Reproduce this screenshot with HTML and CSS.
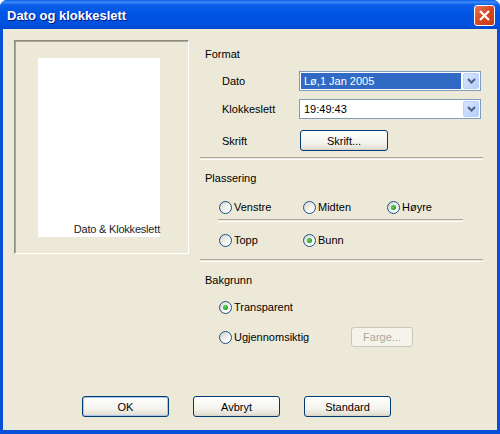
FILE: index.html
```html
<!DOCTYPE html>
<html lang="no">
<head>
  <meta charset="UTF-8" />
  <title>Dato og klokkeslett</title>
  <link rel="stylesheet" href="styles.css">
</head>
<body>
  <div class="window">
    <div class="titlebar">
      <span class="title">Dato og klokkeslett</span>
      <div class="close">
        <svg width="13" height="13" viewBox="0 0 13 13"><path d="M2 2 L11 11 M11 2 L2 11" stroke="#fff" stroke-width="2.2" fill="none"/></svg>
      </div>
    </div>

    <div class="client">
      <div class="main">
        <!-- forhåndsvisning -->
        <div class="preview">
          <div class="paper"><span>Dato &amp; Klokkeslett</span></div>
        </div>

        <div class="settings">
          <div class="group-title first">Format</div>
          <div class="field dato">
            <span>Dato</span>
            <div class="combo">
              <div class="combo-text selected">Lø,1 Jan 2005</div>
              <div class="combo-btn"><svg width="9" height="6" viewBox="0 0 9 6"><path d="M1 1 L4.5 4.5 L8 1" stroke="#4d6185" stroke-width="2" fill="none"/></svg></div>
            </div>
          </div>
          <div class="field klokke">
            <span>Klokkeslett</span>
            <div class="combo">
              <div class="combo-text">19:49:43</div>
              <div class="combo-btn"><svg width="9" height="6" viewBox="0 0 9 6"><path d="M1 1 L4.5 4.5 L8 1" stroke="#4d6185" stroke-width="2" fill="none"/></svg></div>
            </div>
          </div>
          <div class="field skrift">
            <span>Skrift</span>
            <button class="xp-btn font-btn">Skrift...</button>
          </div>

          <div class="sep"></div>

          <div class="group-title">Plassering</div>
          <div class="radio-row row-top">
            <label class="opt"><i class="radio"></i>Venstre</label>
            <label class="opt"><i class="radio"></i>Midten</label>
            <label class="opt"><i class="radio on"></i>Høyre</label>
          </div>
          <div class="sep inner"></div>
          <div class="radio-row row-bottom">
            <label class="opt"><i class="radio"></i>Topp</label>
            <label class="opt"><i class="radio on"></i>Bunn</label>
          </div>

          <div class="sep low"></div>

          <div class="group-title">Bakgrunn</div>
          <div class="radio-row row-trans">
            <label class="opt"><i class="radio on"></i>Transparent</label>
          </div>
          <div class="radio-row row-opaque">
            <label class="opt wide"><i class="radio"></i>Ugjennomsiktig</label>
            <button class="xp-btn disabled">Farge...</button>
          </div>
        </div>
      </div>

      <div class="buttons">
        <button class="xp-btn big default">OK</button>
        <button class="xp-btn big">Avbryt</button>
        <button class="xp-btn big">Standard</button>
      </div>
    </div>
  </div>
</body>
</html>
```

FILE: styles.css
```css
body {
  margin: 0;
  width: 500px;
  height: 434px;
  overflow: hidden;
  background: #fff;
  font-family: "Liberation Sans", Arial, sans-serif;
  font-size: 11px;
  color: #000;
}

.window {
  width: 500px;
  height: 434px;
  box-sizing: border-box;
  background: #0850d8;
  border-radius: 7px 7px 0 0;
  display: flex;
  flex-direction: column;
  padding: 0 3px 4px 3px;
}

.titlebar {
  height: 29px;
  margin: 0 -3px;
  border-radius: 7px 7px 0 0;
  background: linear-gradient(#0a5de8 0px, #3d8cf8 2px, #0b5ee9 5px, #0055e5 14px, #0051de 24px, #0148cf 29px);
  display: flex;
  align-items: center;
  justify-content: space-between;
  padding: 0 5px 0 7px;
}

.title {
  color: #fff;
  font-weight: bold;
  font-size: 13px;
  text-shadow: 1px 1px #0a1883;
  margin-top: 1px;
}

.close {
  width: 21px;
  height: 21px;
  box-sizing: border-box;
  border: 1px solid #fff;
  border-radius: 3px;
  background: linear-gradient(135deg, #e8785a, #d9461f 50%, #c83c16);
  display: flex;
  align-items: center;
  justify-content: center;
  margin-top: 2px;
}

.client {
  flex: 1;
  background: #ece9d8;
  display: flex;
  flex-direction: column;
}

.main {
  display: flex;
  padding: 11px 0 0 11px;
}

.preview {
  width: 175px;
  height: 214px;
  box-sizing: border-box;
  border-top: 1px solid #8d8b80;
  border-left: 1px solid #8d8b80;
  border-right: 1px solid #fff;
  border-bottom: 1px solid #fff;
  box-shadow: inset 1px 1px #aca899;
  padding: 17px 0 0 23px;
}

.paper {
  width: 122px;
  height: 179px;
  background: #fff;
  display: flex;
  align-items: flex-end;
  justify-content: flex-end;
  color: #222;
  padding-bottom: 2px;
  box-sizing: border-box;
  letter-spacing: -0.2px;
}

.settings {
  width: 283px;
  margin-left: 11px;
}

.group-title {
  height: 14px;
  line-height: 14px;
  padding-left: 5px;
  margin-top: 11px;
}

.group-title.first {
  margin-top: 7px;
}

.field {
  display: grid;
  grid-template-columns: 77px 182px;
  align-items: center;
  padding-left: 22px;
}

.dato { margin-top: 10px; }
.klokke { margin-top: 8px; }
.skrift { margin-top: 11px; }

.combo {
  height: 20px;
  box-sizing: border-box;
  border: 1px solid #7f9db9;
  background: #fff;
  display: flex;
  padding: 1px;
}

.combo-text {
  flex: 1;
  line-height: 16px;
  padding-left: 3px;
  margin-right: 2px;
}

.combo-text.selected {
  background: #316ac5;
  color: #fff;
}

.combo-btn {
  width: 16px;
  box-sizing: border-box;
  border: 1px solid #b9d1fa;
  border-radius: 2px;
  background: linear-gradient(135deg, #d8e5fd, #b8cdf8);
  display: flex;
  align-items: center;
  justify-content: center;
}

.xp-btn {
  font-family: "Liberation Sans", Arial, sans-serif;
  font-size: 11px;
  color: #000;
  height: 21px;
  padding: 0;
  box-sizing: border-box;
  border: 1px solid #003c74;
  border-radius: 3px;
  background: linear-gradient(#fff, #f4f3ee 60%, #e6e3d6 90%, #d6d0c5);
}

.font-btn {
  width: 88px;
  margin-left: 1px;
}

.xp-btn.disabled {
  width: 62px;
  height: 20px;
  border-color: #c9c7ba;
  background: #f5f4ea;
  color: #aca899;
}

.sep {
  height: 1px;
  border-top: 1px solid #aca899;
  border-bottom: 1px solid #fff;
  margin-top: 6px;
}

.sep.inner {
  width: 245px;
  margin: 5px 0 0 18px;
}

.sep.low {
  margin-top: 12px;
}

.radio-row {
  display: flex;
  align-items: center;
  padding-left: 19px;
  height: 13px;
}

.row-top { margin-top: 16px; }
.row-bottom { margin-top: 12px; }
.row-trans { margin-top: 14px; }
.row-opaque {
  height: 20px;
  margin-top: 13px;
}

.opt {
  display: flex;
  align-items: center;
  gap: 2px;
  width: 84px;
  line-height: 13px;
}

.opt.wide {
  width: 132px;
}

.radio {
  width: 13px;
  height: 13px;
  box-sizing: border-box;
  border-radius: 50%;
  border: 1px solid #1c5180;
  background: linear-gradient(135deg, #d4d3cb, #f6f6f3 60%, #fff);
  display: flex;
  align-items: center;
  justify-content: center;
}

.radio.on::after {
  content: "";
  width: 5px;
  height: 5px;
  border-radius: 50%;
  background: radial-gradient(circle at 40% 40%, #5bd35b, #21a121 70%);
}

.buttons {
  margin-top: auto;
  display: flex;
  gap: 24px;
  padding: 0 0 13px 79px;
}

.xp-btn.big {
  width: 87px;
}

.xp-btn.default {
  box-shadow: inset 0 0 0 1px #a9c4f2;
}
```
